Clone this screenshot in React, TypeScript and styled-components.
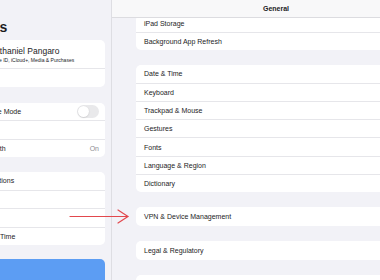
import React from "react";
import styled, { createGlobalStyle } from "styled-components";

const GlobalStyle = createGlobalStyle`
  html, body {
    margin: 0;
    padding: 0;
    background: #f2f2f7;
  }
  * {
    box-sizing: border-box;
  }
`;

const Screen = styled.div`
  position: relative;
  display: flex;
  width: 380px;
  height: 280px;
  overflow: hidden;
  font-family: "Liberation Sans", Arial, sans-serif;
  color: #1c1c1e;
  background: #f2f2f7;
`;

/* sidebar (scrolled so that its left side is cut off) */
const Sidebar = styled.aside`
  flex: 0 0 112px;
  height: 100%;
  overflow: hidden;
  background: #f2f2f7;
  border-right: 1px solid #dedee3;
`;

const SidebarInner = styled.div`
  width: 153px;
  margin-left: -40px;
  padding-right: 8px;
  display: flex;
  flex-direction: column;
`;

const LargeTitle = styled.h1`
  margin: 0 0 6px -8px;
  padding: 20px 0 0 0;
  font-size: 14px;
  line-height: 14px;
  font-weight: 700;
  white-space: nowrap;
`;

const Group = styled.div<{ $gap?: number }>`
  background: #fff;
  border-radius: 5px;
  overflow: hidden;
  margin-bottom: ${p => p.$gap ?? 15}px;
`;

const SideRow = styled.div`
  box-sizing: content-box;
  display: flex;
  align-items: center;
  height: 17.5px;
  padding: 0 6px 0 16px;
  font-size: 7px;
  white-space: nowrap;
  & + & {
    border-top: 1px solid #e6e6ea;
  }
`;

const ProfileRow = styled(SideRow)`
  height: 28px;
  padding-left: 29px;
  flex-direction: column;
  align-items: flex-start;
  justify-content: center;
  gap: 1px;
`;

const ProfileName = styled.span`
  font-size: 8.5px;
  line-height: 10px;
`;

const ProfileSub = styled.span`
  font-size: 5px;
  line-height: 6px;
`;

const Label = styled.span`
  flex: 1;
`;

const Value = styled.span`
  color: #8e8e93;
`;

const Toggle = styled.span`
  position: relative;
  width: 22px;
  height: 13px;
  border-radius: 7px;
  background: #e9e9eb;
  &::after {
    content: "";
    position: absolute;
    left: 1px;
    top: 1px;
    width: 11px;
    height: 11px;
    border-radius: 50%;
    background: #fff;
    box-shadow: 0 0.5px 1.5px rgba(0, 0, 0, 0.18);
  }
`;

const SelectedRow = styled.div`
  height: 24px;
  background: #5c9df3;
  border-radius: 0 5px 0 0;
`;

/* detail pane */
const Detail = styled.main`
  flex: 0 0 328px;
  height: 100%;
  display: flex;
  flex-direction: column;
  background: #f2f2f7;
`;

const NavBar = styled.header`
  flex: 0 0 18px;
  display: flex;
  align-items: center;
  justify-content: center;
  background: #f8f8f9;
  border-bottom: 1px solid #dcdce0;
  font-size: 7px;
  font-weight: 700;
`;

const Scroll = styled.div`
  flex: 1;
  overflow: hidden;
`;

const ScrollInner = styled.div`
  margin-top: -3.3px;
  padding: 0 24px;
`;

const DetailRow = styled.div`
  box-sizing: content-box;
  display: flex;
  align-items: center;
  height: 17.3px;
  padding-left: 8px;
  font-size: 7px;
  white-space: nowrap;
  & + & {
    border-top: 1px solid #e6e6ea;
  }
  &:only-child {
    height: 18.6px;
  }
`;

const Arrow = styled.svg`
  position: absolute;
  left: 69px;
  top: 208px;
  width: 61px;
  height: 17px;
  overflow: visible;
`;

const detailGroups = [
  ["iPad Storage", "Background App Refresh"],
  ["Date & Time", "Keyboard", "Trackpad & Mouse", "Gestures", "Fonts", "Language & Region", "Dictionary"],
  ["VPN & Device Management"],
  ["Legal & Regulatory"],
  ["Transfer or Reset iPad"],
];

export default function App() {
  return (
    <>
      <GlobalStyle />
      <Screen>
        <Sidebar>
          <SidebarInner>
            <LargeTitle>Settings</LargeTitle>
            <Group $gap={16}>
              <ProfileRow>
                <ProfileName>Nathaniel Pangaro</ProfileName>
                <ProfileSub>Apple ID, iCloud+, Media &amp; Purchases</ProfileSub>
              </ProfileRow>
              <SideRow />
            </Group>
            <Group>
              <SideRow>
                <Label>Airplane Mode</Label>
                <Toggle />
              </SideRow>
              <SideRow>
                <Label>Wi-Fi</Label>
              </SideRow>
              <SideRow>
                <Label>Bluetooth</Label>
                <Value>On</Value>
              </SideRow>
            </Group>
            <Group $gap={14}>
              <SideRow>
                <Label>Notifications</Label>
              </SideRow>
              <SideRow>
                <Label>Sounds</Label>
              </SideRow>
              <SideRow>
                <Label>Focus</Label>
              </SideRow>
              <SideRow>
                <Label>Screen Time</Label>
              </SideRow>
            </Group>
            <SelectedRow />
          </SidebarInner>
        </Sidebar>

        <Detail>
          <NavBar>General</NavBar>
          <Scroll>
            <ScrollInner>
              {detailGroups.map((rows, i) => (
                <Group key={i}>
                  {rows.map(r => (
                    <DetailRow key={r}>{r}</DetailRow>
                  ))}
                </Group>
              ))}
            </ScrollInner>
          </Scroll>
        </Detail>

        <Arrow viewBox="0 0 61 17">
          <g fill="none" stroke="#e2484d" strokeWidth="1.2" strokeLinecap="round" strokeLinejoin="round">
            <line x1="1" y1="8.5" x2="59" y2="8.5" />
            <polyline points="49,2 59,8.5 49,15" />
          </g>
        </Arrow>
      </Screen>
    </>
  );
}
